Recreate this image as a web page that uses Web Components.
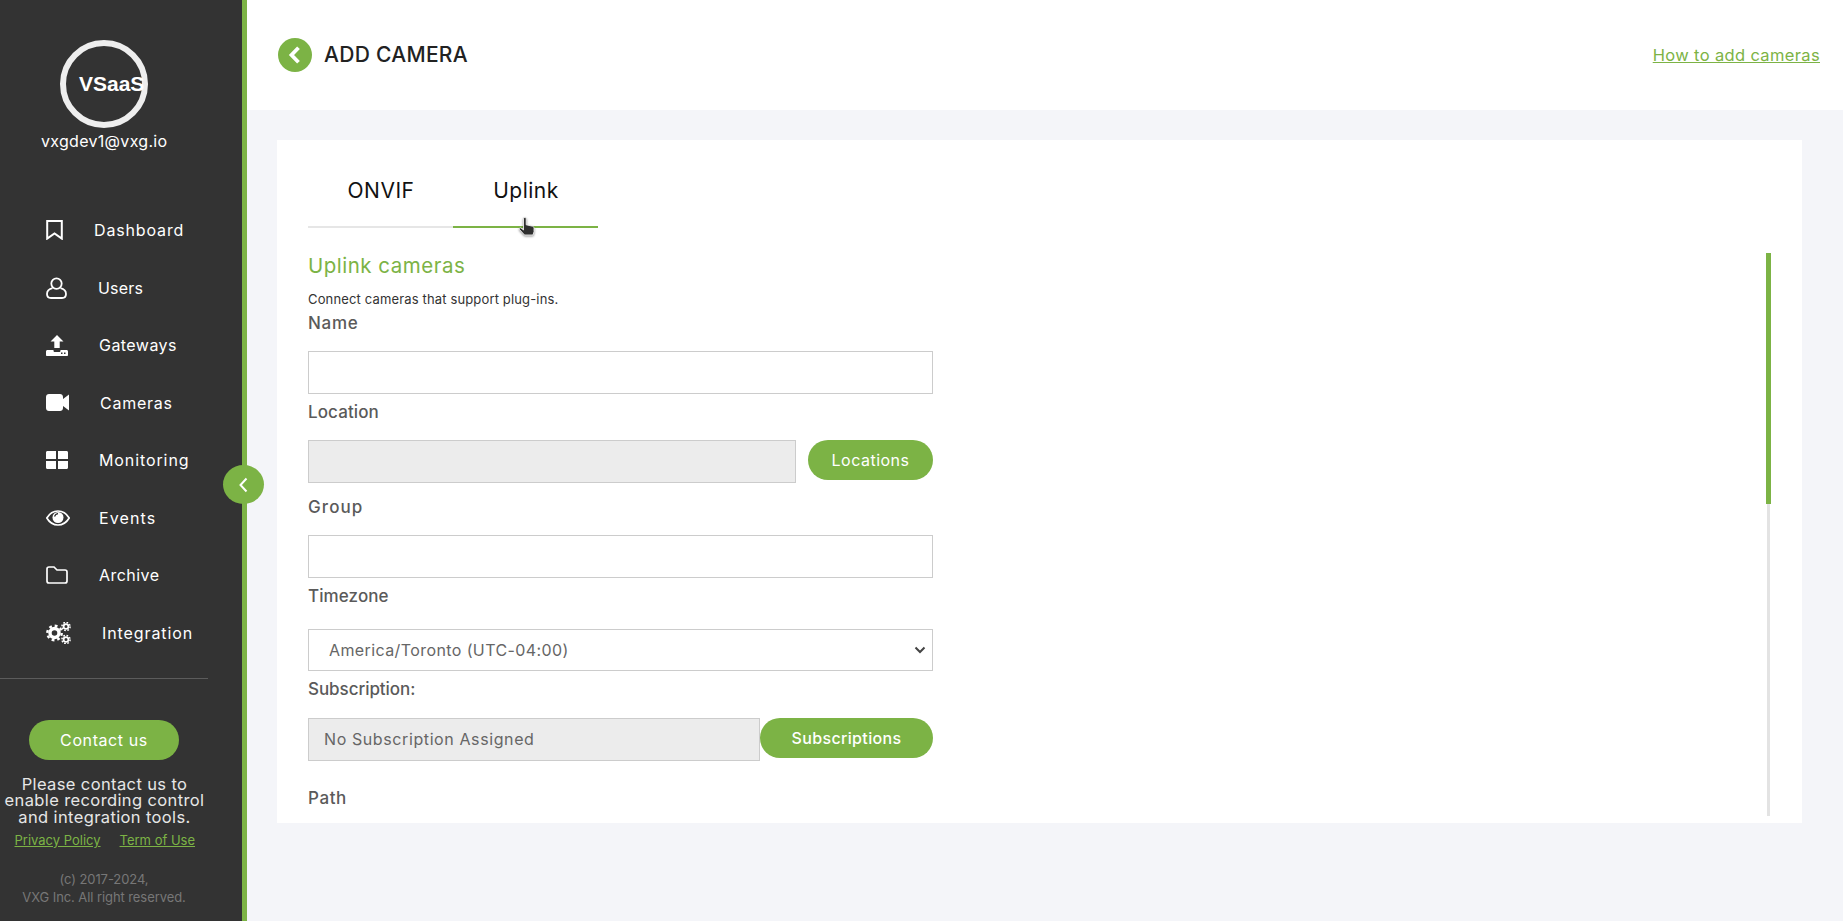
<!doctype html>
<html>
<head>
<meta charset="utf-8">
<title>Add camera</title>
<style>
  html, body { margin: 0; height: 100%; }
  body { font-family: Inter, "Open Sans", sans-serif; background: #f4f5f9; overflow: hidden; }
</style>
</head>
<body>
<vxg-app>
  <vxg-sidebar slot="side">
    <nav-item label="Dashboard" icon="bookmark" w="17" style="--ls:.85px"></nav-item>
    <nav-item label="Users" icon="user" w="21" style="--ls:.2px"></nav-item>
    <nav-item label="Gateways" icon="upload" w="22" style="--ls:.45px"></nav-item>
    <nav-item label="Cameras" icon="camera" w="23" style="--ls:.75px"></nav-item>
    <nav-item label="Monitoring" icon="grid" w="22" style="--ls:.9px"></nav-item>
    <nav-item label="Events" icon="eye" w="24" style="--ls:1.1px;--gap:29px"></nav-item>
    <nav-item label="Archive" icon="folder" w="22" style="--ls:.45px"></nav-item>
    <nav-item label="Integration" icon="gears" w="25" style="--ls:.9px"></nav-item>
  </vxg-sidebar>
  <page-header slot="head"></page-header>
  <content-card slot="card">
    <form-field label="Name" style="--top:4px;--gap:18px;--ls:.7px"><text-box></text-box></form-field>
    <form-field label="Location" style="--top:8px;--gap:18px"><text-box disabled></text-box><pill-button style="margin-left:12px;width:125px">Locations</pill-button></form-field>
    <form-field label="Group" style="--top:14px;--gap:18px;--ls:1.1px"><text-box></text-box></form-field>
    <form-field label="Timezone" style="--top:8px;--gap:23px"><select-box>America/Toronto (UTC-04:00)</select-box></form-field>
    <form-field label="Subscription:" style="--top:8px;--gap:19px;--ls:-.05px"><text-box disabled value="No Subscription Assigned"></text-box><pill-button strong style="width:173px;letter-spacing:.35px">Subscriptions</pill-button></form-field>
    <form-field label="Path" style="--top:27px;--ls:.6px"></form-field>
  </content-card>
</vxg-app>

<script>
const FONT = 'Inter, "Open Sans", sans-serif';
const GREEN = '#7cb345';

const ICONS = {
  bookmark: '<svg viewBox="0 0 17 20" width="17" height="20"><path d="M1.2 1h14.6v17.6L8.5 13.4 1.2 18.6z" fill="none" stroke="#fff" stroke-width="2"/></svg>',
  user: '<svg viewBox="0 0 21 22" width="21" height="22"><circle cx="10.5" cy="6.6" r="5.2" fill="none" stroke="#fff" stroke-width="1.8"/><path d="M6.5 11.2C3 12 1 14 1 17c0 2.8 1.6 4 4 4h11c2.4 0 4-1.2 4-4 0-3-2-5-5.5-5.8" fill="none" stroke="#fff" stroke-width="1.8"/></svg>',
  upload: '<svg viewBox="0 0 22 21" width="22" height="21"><path d="M11 0l6.500 6.500h-3.800v6.500H8.300V6.500H4.500z" fill="#fff"/><path d="M0 16.500c0-.8.6-1.500 1.500-1.500h6v.8c0 .8.6 1.200 1.200 1.200h4.600c.6 0 1.200-.4 1.200-1.200V15h6c.9 0 1.500.7 1.500 1.500V20c0 .6-.5 1-1 1H1c-.5 0-1-.4-1-1z" fill="#fff"/><rect x="15" y="17.500" width="1.500" height="1.500" fill="#333"/><rect x="18" y="17.500" width="1.500" height="1.500" fill="#333"/></svg>',
  camera: '<svg viewBox="0 0 23 17" width="23" height="17"><path d="M3 0h11c1.700 0 3 1.300 3 3v2l6-4.500v16l-6-4.500v2c0 1.700-1.300 3-3 3H3c-1.700 0-3-1.300-3-3V3c0-1.700 1.300-3 3-3z" fill="#fff"/></svg>',
  grid: '<svg viewBox="0 0 22 18" width="22" height="18"><path d="M1.500 0H10v8H0V1.500C0 .6.600 0 1.500 0zM12 0h8.500c.9 0 1.500.6 1.500 1.500V8H12zM0 10h10v8H1.500C.6 18 0 17.400 0 16.500zM12 10h10v6.500c0 .9-.6 1.500-1.500 1.500H12z" fill="#fff"/></svg>',
  eye: '<svg viewBox="0 0 24 16" width="24" height="16"><path d="M.8 8C3.500 3.500 7.500 1 12 1s8.500 2.500 11.200 7C20.500 12.500 16.500 15 12 15S3.500 12.500.8 8z" fill="none" stroke="#fff" stroke-width="1.700"/><circle cx="12" cy="7.500" r="5.500" fill="#fff"/><path d="M8.500 6.500C9 4.800 10.300 3.800 12 3.500" stroke="#333" stroke-width="1.300" fill="none"/></svg>',
  folder: '<svg viewBox="0 0 22 18" width="22" height="18"><path d="M1 3c0-1.200.8-2 2-2h5l3 3h8c1.200 0 2 .8 2 2v9c0 1.200-.8 2-2 2H3c-1.200 0-2-.8-2-2z" fill="none" stroke="#fff" stroke-width="1.700"/></svg>',
  gears: '<svg viewBox="0 0 25 22" width="25" height="22"><g fill="none" stroke="#fff"><circle cx="8.500" cy="11" r="4.500" stroke-width="3.400"/><circle cx="8.500" cy="11" r="7.200" stroke-width="2.400" stroke-dasharray="2.800 2.850"/><circle cx="20" cy="4.500" r="2.400" stroke-width="1.800"/><circle cx="20" cy="4.500" r="4.100" stroke-width="1.500" stroke-dasharray="1.700 1.520"/><circle cx="20" cy="17.500" r="2.400" stroke-width="1.800"/><circle cx="20" cy="17.500" r="4.100" stroke-width="1.500" stroke-dasharray="1.700 1.520"/></g></svg>'
};

class VxgApp extends HTMLElement {
  constructor() {
    super();
    this.attachShadow({ mode: 'open' }).innerHTML = `
      <style>
        :host { display: flex; height: 921px; width: 1843px; color: #333; font-family: ${FONT}; }
        .main { flex: 1; min-width: 0; display: flex; flex-direction: column; background: #f4f5f9; }
        .body { padding: 30px 41px 0 30px; }
      </style>
      <slot name="side"></slot>
      <div class="main">
        <slot name="head"></slot>
        <div class="body"><slot name="card"></slot></div>
      </div>`;
  }
}

class VxgSidebar extends HTMLElement {
  constructor() {
    super();
    this.attachShadow({ mode: 'open' }).innerHTML = `
      <style>
        :host {
          display: flex; flex-direction: column; align-items: stretch; position: relative;
          box-sizing: border-box; width: 247px; height: 921px; flex: none;
          background: #333; border-right: 5px solid ${GREEN}; color: #fff;
        }
        .avatar {
          box-sizing: border-box; width: 88px; height: 88px; margin: 40px 0 0 60px;
          border: 6px solid #eee; border-radius: 50%;
          font: bold 21px/76px "Liberation Sans", sans-serif; white-space: nowrap; padding-left: 13px; color: #fff;
        }
        .email { font-size: 16px; line-height: 20px; margin: 3px 0 0 41px; letter-spacing: .3px; white-space: nowrap; }
        nav { margin-top: 50.4px; display: flex; flex-direction: column; }
        hr { margin: 16.6px 34px 0 0; border: 0; border-top: 1px solid #5c5c5c; height: 0; }
        .contact {
          align-self: flex-start; margin: 41px 0 0 29px; width: 150px; height: 40px; border-radius: 20px;
          background: ${GREEN}; color: #fff; font-size: 16px; line-height: 40px; text-align: center; letter-spacing: .6px;
        }
        .note { margin: 16px 34px 0 0; text-align: center; font-size: 16.5px; line-height: 16.3px; color: #e6e6e6; letter-spacing: .38px; white-space: nowrap; padding-left: 1px; }
        .links { margin: 6px 0 0 14.5px; display: flex; gap: 19px; font-size: 13px; line-height: 18px; }
        .links a { color: ${GREEN}; text-decoration: underline; }
        .copy { margin: 21px 34px 0 0; text-align: center; font-size: 13px; line-height: 18px; color: #777; letter-spacing: -.08px; white-space: nowrap; }
        .toggle {
          position: absolute; left: 223px; top: 465px; width: 41px; height: 39px; border-radius: 50%;
          background: ${GREEN}; display: flex; align-items: center; justify-content: center;
        }
      </style>
      <div class="avatar">VSaaS</div>
      <div class="email">vxgdev1@vxg.io</div>
      <nav><slot></slot></nav>
      <hr>
      <div class="contact">Contact us</div>
      <div class="note">Please contact us to<br>enable recording control<br>and integration tools.</div>
      <div class="links"><a>Privacy Policy</a><a>Term of Use</a></div>
      <div class="copy">(c) 2017-2024,<br>VXG Inc. All right reserved.</div>
      <div class="toggle"><svg width="11" height="16" viewBox="0 0 11 16"><path d="M8.500 1.500 2.500 8l6 6.500" fill="none" stroke="#fff" stroke-width="2"/></svg></div>`;
  }
}

class NavItem extends HTMLElement {
  connectedCallback() {
    if (this.shadowRoot) return;
    const w = this.getAttribute('w');
    this.attachShadow({ mode: 'open' }).innerHTML = `
      <style>
        :host { display: flex; align-items: center; height: 57.5px; padding-left: 46px; gap: var(--gap, 31px); font-size: 16px; letter-spacing: var(--ls, .45px); color: #fff; white-space: nowrap; }
        .icon { width: ${w}px; display: flex; align-items: center; justify-content: flex-start; }
        svg { display: block; }
      </style>
      <span class="icon">${ICONS[this.getAttribute('icon')]}</span><span>${this.getAttribute('label')}</span>`;
  }
}

class PageHeader extends HTMLElement {
  constructor() {
    super();
    this.attachShadow({ mode: 'open' }).innerHTML = `
      <style>
        :host { display: flex; align-items: center; height: 110px; background: #fff; box-sizing: border-box; padding: 0 23px 1px 31px; }
        .back { width: 34px; height: 34px; border-radius: 50%; background: ${GREEN}; display: flex; align-items: center; justify-content: center; margin-right: 12px; }
        h1 { margin: 0; font-size: 21px; font-weight: 500; color: #222; flex: 1; letter-spacing: .3px; }
        a { color: ${GREEN}; text-decoration: underline; font-size: 16.5px; letter-spacing: .35px; }
      </style>
      <span class="back"><svg width="16" height="20" viewBox="0 0 16 20"><path d="M11.500 2.800 4.500 10l7 7.200" fill="none" stroke="#fff" stroke-width="3.800"/></svg></span>
      <h1>ADD CAMERA</h1>
      <a>How to add cameras</a>`;
  }
}

class ContentCard extends HTMLElement {
  constructor() {
    super();
    this.attachShadow({ mode: 'open' }).innerHTML = `
      <style>
        :host { display: block; position: relative; box-sizing: border-box; height: 683px; background: #fff; padding: 0 31px; overflow: hidden; }
        .tabs { display: flex; width: 290px; padding-top: 37px; }
        .tab { flex: 1; height: 49px; text-align: center; font-size: 21px; line-height: 28px; color: #111; border-bottom: 2px solid #e6e6e6; letter-spacing: .5px; padding-left: 1px; }
        .tab.on { border-bottom-color: ${GREEN}; }
        h2 { margin: 24px 0 0; font-size: 20.5px; line-height: 28px; font-weight: 400; color: ${GREEN}; letter-spacing: .5px; }
        p { margin: 8.5px 0 0; font-size: 13px; line-height: 20px; color: #333; letter-spacing: .15px; }
        .form { width: 625px; }
        .track { position: absolute; left: 1490px; top: 113px; width: 3px; height: 563px; background: #e3e3e3; }
        .thumb { position: absolute; left: 1489px; top: 113px; width: 5px; height: 251px; background: ${GREEN}; }
        .cursor { position: absolute; left: 241px; top: 77px; filter: drop-shadow(0 1px 1px rgba(0,0,0,.45)); }
      </style>
      <div class="tabs"><div class="tab">ONVIF</div><div class="tab on">Uplink</div></div>
      <h2>Uplink cameras</h2>
      <p>Connect cameras that support plug-ins.</p>
      <div class="form"><slot></slot></div>
      <div class="track"></div><div class="thumb"></div>
      <svg class="cursor" width="18" height="19" viewBox="0 0 18 19"><path d="M5.500 1.500c0-1.300 2.700-1.300 2.700 0v6.300l6.300 1.400c1 .2 1.500 1 1.500 2v3.500l-1 3.300H6.500L1.500 12.500c-.8-1 .5-2.200 1.500-1.500L5.500 13z" fill="#2f2f2f" stroke="#fff" stroke-width=".8"/></svg>`;
  }
}

class FormField extends HTMLElement {
  connectedCallback() {
    if (this.shadowRoot) return;
    this.attachShadow({ mode: 'open' }).innerHTML = `
      <style>
        :host { display: block; padding-top: var(--top, 0); }
        label { display: block; font-size: 17px; line-height: 20px; font-weight: 500; color: #5a5a5a; letter-spacing: var(--ls, .1px); }
        .row { display: flex; align-items: flex-start; margin-top: var(--gap, 18px); }
      </style>
      <label>${this.getAttribute('label')}</label>
      <div class="row"><slot></slot></div>`;
  }
}

class TextBox extends HTMLElement {
  connectedCallback() {
    if (this.shadowRoot) return;
    const off = this.hasAttribute('disabled');
    this.attachShadow({ mode: 'open' }).innerHTML = `
      <style>
        :host { display: block; flex: 1; min-width: 0; height: 43px; box-sizing: border-box; border: 1px solid #ccc; background: ${off ? '#ececec' : '#fff'}; padding: 0 15px; font-size: 16px; line-height: 41px; color: #666; letter-spacing: .6px; white-space: nowrap; }
      </style>${this.getAttribute('value') || ''}`;
  }
}

class SelectBox extends HTMLElement {
  constructor() {
    super();
    this.attachShadow({ mode: 'open' }).innerHTML = `
      <style>
        :host { display: flex; flex: 1; align-items: center; height: 42px; box-sizing: border-box; border: 1px solid #ccc; background: #fff; padding: 0 6px 0 20px; font-size: 16px; color: #666; letter-spacing: .4px; white-space: nowrap; }
        span { flex: 1; }
      </style>
      <span><slot></slot></span>
      <svg width="12" height="8" viewBox="0 0 12 8"><path d="M1.500 1.500 6 6l4.500-4.500" fill="none" stroke="#444" stroke-width="2"/></svg>`;
  }
}

class PillButton extends HTMLElement {
  constructor() {
    super();
    this.attachShadow({ mode: 'open' }).innerHTML = `
      <style>
        :host { display: block; flex: none; box-sizing: border-box; height: 40px; border-radius: 20px; background: ${GREEN}; color: #fff; text-align: center; font-size: 16px; line-height: 40px; letter-spacing: .5px; }
        :host([strong]) { font-weight: 500; }
      </style><slot></slot>`;
  }
}

customElements.define('vxg-app', VxgApp);
customElements.define('vxg-sidebar', VxgSidebar);
customElements.define('nav-item', NavItem);
customElements.define('page-header', PageHeader);
customElements.define('content-card', ContentCard);
customElements.define('form-field', FormField);
customElements.define('text-box', TextBox);
customElements.define('select-box', SelectBox);
customElements.define('pill-button', PillButton);
</script>
</body>
</html>
